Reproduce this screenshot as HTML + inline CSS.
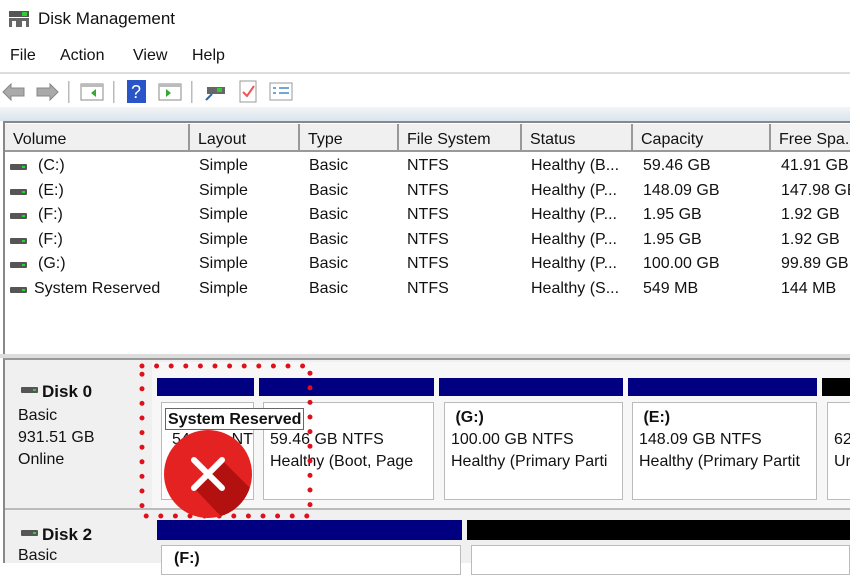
<!DOCTYPE html>
<html><head><meta charset="utf-8"><style>
*{margin:0;padding:0;box-sizing:border-box}
body{width:850px;height:563px;overflow:hidden;background:#fff;font-family:"Liberation Sans",sans-serif;color:#111;position:relative}
.a{position:absolute;white-space:nowrap}
.t{font-size:16px}
.hd{position:absolute;top:124px;height:28px;background:#f0f0f0;border-right:2px solid #999;border-bottom:2px solid #999;font-size:16px;padding:7px 0 0 8px}
.ic{position:absolute;width:17px;height:6px;background:#555;border-radius:1px}
.ic:after{content:"";position:absolute;right:2px;top:2px;width:3px;height:2px;background:#3c3}
.bar{position:absolute;top:378px;height:18px;background:#000080}
.box{position:absolute;top:402px;height:98px;background:#fff;border:1px solid #bbb;font-size:16px;padding:4px 0 0 10px;line-height:22px;overflow:hidden}
</style></head><body>
<svg class="a" style="left:8px;top:9px" width="22" height="20"><rect x="1" y="2" width="20" height="6" fill="#555"/><rect x="14" y="3" width="5" height="4" fill="#3c3"/><rect x="1" y="9" width="20" height="9" fill="#666"/><rect x="4" y="12" width="4" height="6" fill="#fff"/><rect x="14" y="12" width="4" height="6" fill="#fff"/></svg>
<div class="a" style="left:38px;top:9px;font-size:17px">Disk Management</div>
<div class="a t" style="left:10px;top:47px">File</div>
<div class="a t" style="left:60px;top:47px">Action</div>
<div class="a t" style="left:133px;top:47px">View</div>
<div class="a t" style="left:192px;top:47px">Help</div>
<div class="a" style="left:0;top:72px;width:850px;height:2px;background:#ddd"></div>
<svg class="a" style="left:0;top:78px" width="320" height="28">
<path d="M3 14 L11 6 V10 H24 V18 H11 V22 Z" fill="#aaa" stroke="#888"/>
<path d="M58 14 L50 6 V10 H37 V18 H50 V22 Z" fill="#aaa" stroke="#888"/>
<rect x="68" y="3" width="1.5" height="22" fill="#bbb"/>
<rect x="81" y="6" width="22" height="16" fill="#fff" stroke="#888"/><rect x="81" y="6" width="22" height="3" fill="#bbb"/><path d="M96 11 L91 15 L96 19Z" fill="#3a3"/>
<rect x="113" y="3" width="1.5" height="22" fill="#bbb"/>
<rect x="127" y="2" width="19" height="23" fill="#2a55c8"/><text x="131" y="20" fill="#fff" font-size="18" font-family="Liberation Sans">?</text>
<rect x="159" y="6" width="22" height="16" fill="#fff" stroke="#888"/><rect x="159" y="6" width="22" height="3" fill="#bbb"/><path d="M166 11 L171 15 L166 19Z" fill="#3a3"/>
<rect x="191" y="3" width="1.5" height="22" fill="#bbb"/>
<rect x="207" y="9" width="18" height="7" fill="#666"/><rect x="217" y="10" width="5" height="4" fill="#3c3"/><path d="M206 22 L212 16" stroke="#369" stroke-width="2"/>
<rect x="240" y="3" width="16" height="21" fill="#fff" stroke="#999"/><path d="M243 14 L247 18 L254 8" stroke="#e55" stroke-width="2" fill="none"/>
<rect x="270" y="5" width="22" height="17" fill="#fff" stroke="#999"/><path d="M273 10h3M279 10h10M273 15h3M279 15h10" stroke="#48c" stroke-width="1.5"/>
</svg>
<div class="a" style="left:0;top:107px;width:850px;height:14px;background:linear-gradient(#f4f4f4,#d8e4f0)"></div>
<div class="a" style="left:3px;top:121px;width:847px;height:236px;border-left:2px solid #888;border-top:2px solid #888;background:#fff"></div>
<div class="hd" style="left:5px;width:185px">Volume</div>
<div class="hd" style="left:190px;width:110px">Layout</div>
<div class="hd" style="left:300px;width:99px">Type</div>
<div class="hd" style="left:399px;width:123px">File System</div>
<div class="hd" style="left:522px;width:111px">Status</div>
<div class="hd" style="left:633px;width:138px">Capacity</div>
<div class="hd" style="left:771px;width:90px">Free Spa...</div>
<div id="rows"></div>
<script>
var r=[["(C:)","Healthy (B...","59.46 GB","41.91 GB"],["(E:)","Healthy (P...","148.09 GB","147.98 GB"],["(F:)","Healthy (P...","1.95 GB","1.92 GB"],["(F:)","Healthy (P...","1.95 GB","1.92 GB"],["(G:)","Healthy (P...","100.00 GB","99.89 GB"],["System Reserved","Healthy (S...","549 MB","144 MB"]];
var h="";r.forEach(function(x,i){var y=157+i*24.5;var vx=x[0].length>5?34:38;
h+='<div class="ic" style="left:10px;top:'+(y+7)+'px"></div><div class="a t" style="left:'+vx+'px;top:'+y+'px">'+x[0]+'</div><div class="a t" style="left:199px;top:'+y+'px">Simple</div><div class="a t" style="left:309px;top:'+y+'px">Basic</div><div class="a t" style="left:407px;top:'+y+'px">NTFS</div><div class="a t" style="left:531px;top:'+y+'px">'+x[1]+'</div><div class="a t" style="left:643px;top:'+y+'px">'+x[2]+'</div><div class="a t" style="left:781px;top:'+y+'px">'+x[3]+'</div>';});
document.getElementById("rows").innerHTML=h;
</script>
<div class="a" style="left:0;top:354px;width:850px;height:4px;background:#ddd"></div>
<div class="a" style="left:3px;top:358px;width:847px;height:205px;background:#f0f0f0;border-left:2px solid #888;border-top:2px solid #999"></div>
<div class="a" style="left:152px;top:362px;width:698px;height:146px;background:#f7f7f7"></div>
<div class="a" style="left:5px;top:508px;width:845px;height:2px;background:#bbb"></div>
<div class="ic" style="left:21px;top:387px"></div>
<div class="a" style="left:42px;top:382px;font-size:17px;font-weight:bold">Disk 0</div>
<div class="a t" style="left:18px;top:405px;line-height:22px">Basic<br>931.51 GB<br>Online</div>
<div class="bar" style="left:157px;width:97px"></div>
<div class="bar" style="left:259px;width:175px"></div>
<div class="bar" style="left:439px;width:184px"></div>
<div class="bar" style="left:628px;width:189px"></div>
<div class="bar" style="left:822px;width:28px;background:#000"></div>
<div class="box" style="left:161px;width:93px">&nbsp;<br>549 MB NT</div>
<div class="box" style="left:263px;width:171px;padding-left:6px">&nbsp;<br>59.46 GB NTFS<br>Healthy (Boot, Page</div>
<div class="box" style="left:444px;width:179px;padding-left:6px"><b>&nbsp;(G:)</b><br>100.00 GB NTFS<br>Healthy (Primary Parti</div>
<div class="box" style="left:632px;width:185px;padding-left:6px"><b>&nbsp;(E:)</b><br>148.09 GB NTFS<br>Healthy (Primary Partit</div>
<div class="box" style="left:827px;width:30px;padding-left:6px">&nbsp;<br>62<br>Ur</div>
<div class="a" style="left:165px;top:408px;border:1px solid #666;background:#fff;font-size:16px;font-weight:bold;padding:0 2px;height:22px;line-height:21px">System Reserved</div>
<div class="ic" style="left:21px;top:530px"></div>
<div class="a" style="left:42px;top:525px;font-size:17px;font-weight:bold">Disk 2</div>
<div class="a t" style="left:18px;top:547px">Basic</div>
<div class="a" style="left:157px;top:520px;width:305px;height:20px;background:#000080"></div>
<div class="a" style="left:467px;top:520px;width:383px;height:20px;background:#000"></div>
<div class="a" style="left:161px;top:545px;width:300px;height:30px;background:#fff;border:1px solid #bbb;font-size:16px;font-weight:bold;padding:4px 0 0 12px">(F:)</div>
<div class="a" style="left:471px;top:545px;width:379px;height:30px;background:#fff;border:1px solid #bbb"></div>
<svg class="a" style="left:136px;top:361px" width="180" height="160"><rect x="6" y="5" width="168" height="150" fill="none" stroke="#e0101a" stroke-width="5" stroke-dasharray="0 14.6" stroke-linecap="round"/></svg>
<svg class="a" style="left:162px;top:428px" width="92" height="92"><defs><clipPath id="c"><circle cx="46" cy="46" r="44"/></clipPath></defs><circle cx="46" cy="46" r="44" fill="#e52222"/><path d="M60 32 L100 72 L70 100 L32 60Z" fill="#b31010" clip-path="url(#c)"/><path d="M32 32 L60 60 M60 32 L32 60" stroke="#fff" stroke-width="6" stroke-linecap="round"/></svg>
</body></html>
